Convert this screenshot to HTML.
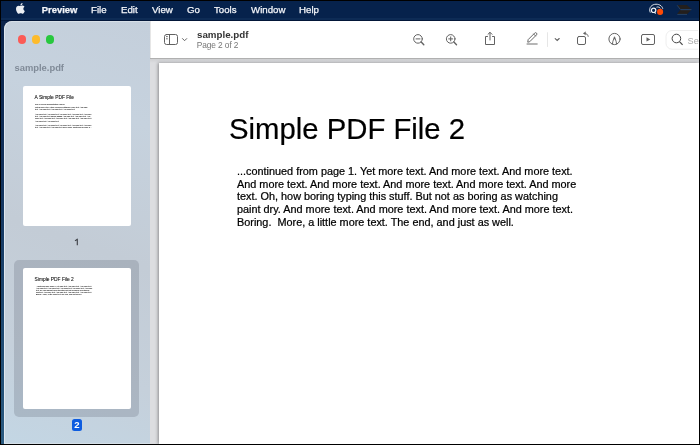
<!DOCTYPE html>
<html><head><meta charset="utf-8">
<style>
*{margin:0;padding:0;box-sizing:border-box}
html,body{width:700px;height:445px;overflow:hidden;background:#000}
body{position:relative;font-family:"Liberation Sans",sans-serif;will-change:transform;background:linear-gradient(#0a2148 0%,#12325c 40%,#1f4a72 75%,#2a5a80 100%)}
.a{position:absolute}
.mi{position:absolute;top:3.9px;color:#f4f6fa;font-size:9.7px;line-height:11px;white-space:nowrap;-webkit-text-stroke:0.25px #f4f6fa}
.tl{position:absolute;width:8.6px;height:8.6px;border-radius:50%;top:35.2px}
.thumb{position:absolute;background:#fff;border-radius:2px;overflow:hidden}
.pg{position:absolute;left:0;top:0;width:650px;height:850px;transform-origin:0 0;color:#000;white-space:nowrap}
.th .bd{-webkit-text-stroke:0.2px #222;color:#222}
.th .ttl{-webkit-text-stroke:0.4px #000}
.t1 .bd{line-height:12.9px;left:73px}
.ttl{position:absolute;left:70px;font-size:29.3px;line-height:34px}
.bd{position:absolute;left:78px;font-size:10.87px;line-height:12.7px;-webkit-text-stroke:0.22px #000}
</style></head><body>
<!-- menubar -->
<div class="a" style="left:0;top:0;width:700px;height:18px;background:#06224c"></div>
<div class="a" style="left:0;top:17.5px;width:700px;height:2.5px;background:#0d2b55"></div>
<div class="a" style="left:0;top:20px;width:700px;height:1px;background:#021638"></div>
<div class="a" style="left:0;top:0;width:700px;height:1px;background:#000"></div>
<div class="a" style="left:0;top:0;width:1px;height:445px;background:#000"></div>
<svg class="a" style="left:16.1px;top:3.2px" width="8.8" height="10.8" viewBox="0 0 814 1000">
  <path fill="#eceff3" d="M788.1 340.9c-5.8 4.5-108.2 62.2-108.2 190.5 0 148.4 130.3 200.9 134.2 202.2-.6 3.2-20.7 71.9-68.7 141.9-42.8 61.6-87.5 123.1-155.5 123.1s-85.5-39.5-164-39.5c-76.5 0-103.7 40.8-165.9 40.8s-105.6-57-155.5-127C46.7 790.7 0 663 0 541.8c0-194.4 126.4-297.5 250.8-297.5 66.1 0 121.2 43.4 162.7 43.4 39.5 0 101.1-46 176.3-46 28.5 0 130.9 2.6 198.3 99.2zm-234-181.5c31.1-36.9 53.1-88.1 53.1-139.3 0-7.1-.6-14.300-1.9-20.1-50.6 1.9-110.8 33.7-147.1 75.8-28.5 32.4-55.1 83.6-55.1 135.5 0 7.8 1.3 15.6 1.9 18.1 3.2.6 8.4 1.3 13.6 1.3 45.4 0 102.5-30.4 135.5-71.3z"/>
</svg>
<div class="mi" style="left:41.7px;top:3.6px;font-weight:bold;font-size:9.45px">Preview</div>
<div class="mi" style="left:91px">File</div>
<div class="mi" style="left:121px">Edit</div>
<div class="mi" style="left:152px">View</div>
<div class="mi" style="left:187px">Go</div>
<div class="mi" style="left:214px">Tools</div>
<div class="mi" style="left:251px">Window</div>
<div class="mi" style="left:299px">Help</div>
<svg class="a" style="left:640px;top:0" width="60" height="20" viewBox="640 0 60 20">
  <g fill="none" stroke="#f0f2f6" stroke-width="0.9">
    <path d="M650.3 12.6 C648.6 9 650.5 5.2 654.5 4.4 C658.5 3.6 662.2 5.6 662.8 8.8"/>
    <path d="M656.5 7.2 C658 6.6 659.6 7.2 660.4 8.4"/>
    <circle cx="653.6" cy="10.3" r="2.2" stroke-width="1.2"/>
    <path d="M654.5 12.2 L655.6 13.6" stroke-width="1.1"/>
  </g>
  <circle cx="660.1" cy="11.9" r="3.05" fill="#ff4b06"/>
  <path d="M677 5.1 L686.8 5.1 L691.6 9.3 L680.1 9.3 Z" fill="#231f1d"/>
  <path d="M680 10.1 L691.2 10.1 L687.1 14.2 L677 14.2 Z" fill="#231f1d"/>
  <path d="M677.2 5.3 L680.2 9.3" stroke="#34587f" stroke-width="0.6"/>
  <path d="M680.5 9.7 H691.5" stroke="#34587f" stroke-width="0.7"/>
  <path d="M677.3 14.4 H687" stroke="#34587f" stroke-width="0.6"/>
</svg>

<!-- window -->
<div class="a" style="left:4px;top:21px;width:695px;height:423px;border-radius:8px 0 0 0;overflow:hidden;background:#dbdbdb">
  <!-- sidebar -->
  <div class="a" style="left:0;top:0;width:146px;height:423px;background:linear-gradient(200deg,#c4cfdb 0%,#c6d2de 22%,#c3ccd6 52%,#c5d0db 78%,#c3d6e4 100%);border-left:1px solid #dfe7ee;border-top:1px solid #d7dfe7;border-radius:8px 0 0 0"></div>
  <div class="a" style="left:0;top:422px;width:146px;height:1px;background:#d6e0e8"></div>
</div>
<div class="tl" style="left:17.75px;background:#fb5b56"></div>
<div class="tl" style="left:31.85px;background:#fdbb2c"></div>
<div class="tl" style="left:45.7px;background:#28c83e"></div>
<div class="a" style="left:14.5px;top:62px;font-size:9.4px;line-height:11px;font-weight:bold;color:#808b98;white-space:nowrap">sample.pdf</div>

<div class="thumb" style="left:23px;top:86px;width:108px;height:140px">
  <div class="pg th t1" style="transform:scale(0.166)">
    <div class="ttl" style="top:53px">A Simple PDF File</div>
    <div class="bd" style="top:103px">This is a small demonstration .pdf file -</div>
    <div class="bd" style="top:123.5px">just for use in the Virtual Mechanics tutorials. More text. And more<br>text. And more text. And more text. And more text.</div>
    <div class="bd" style="top:165px">And more text. And more text. And more text. And more text. And more<br>text. And more text. Boring, zzzzz. And more text. And more text. And<br>more text. And more text. And more text. And more text. And more text.<br>And more text. And more text.</div>
    <div class="bd" style="top:229.5px">And more text. And more text. And more text. And more text. And more<br>text. And more text. And more text. Even more. Continued on page 2 ...</div>
  </div>
</div>
<svg class="a" style="left:70px;top:235px" width="12" height="14" viewBox="70 235 12 14"><path d="M75 240.9 L77.3 239.2 V245.3" fill="none" stroke="#404349" stroke-width="1.15" stroke-linejoin="round"/></svg>
<div class="a" style="left:14px;top:260px;width:125px;height:157px;border-radius:5px;background:rgba(95,105,120,0.26)"></div>
<div class="thumb" style="left:23px;top:268px;width:108px;height:141px">
  <div class="pg th" style="transform:scale(0.166)">
    <div class="ttl" style="top:54px">Simple PDF File 2</div>
    <div class="bd" style="top:104px">...continued from page 1. Yet more text. And more text. And more text.<br>And more text. And more text. And more text. And more text. And more<br>text. Oh, how boring typing this stuff. But not as boring as watching<br>paint dry. And more text. And more text. And more text. And more text.<br>Boring.&nbsp; More, a little more text. The end, and just as well.</div>
  </div>
</div>
<div class="a" style="left:72px;top:418.5px;width:10px;height:12.5px;border-radius:2.5px;background:#0d5ce0;color:#fff;font-size:9.6px;font-weight:bold;text-align:center;line-height:12.5px">2</div>

<!-- doc area -->
<div class="a" style="left:150px;top:59px;width:549px;height:385px;background:linear-gradient(#cfd0d2,#dcdde0 4px,#dcdde0)"></div>
<div class="a" style="left:159px;top:63px;width:540px;height:381px;background:#fff;box-shadow:-1px 0 3px rgba(0,0,0,.36);overflow:hidden">
  <div class="pg" style="left:0;top:0">
    <div class="ttl" style="top:48.6px;left:70px;-webkit-text-stroke:0.2px #000">Simple PDF File 2</div>
    <div class="bd" style="top:102px;left:78px">...continued from page 1. Yet more text. And more text. And more text.<br>And more text. And more text. And more text. And more text. And more<br>text. Oh, how boring typing this stuff. But not as boring as watching<br>paint dry. And more text. And more text. And more text. And more text.<br>Boring.&nbsp; More, a little more text. The end, and just as well.</div>
  </div>
</div>

<!-- toolbar -->
<div class="a" style="left:150px;top:21px;width:549px;height:38px;background:#fff;border-bottom:1px solid #b0b0b0"></div>
<div class="a" style="left:150px;top:21px;width:1px;height:37px;background:#e6e6e6"></div>
<svg class="a" style="left:150px;top:21px" width="548" height="37" viewBox="150 21 548 37">
  <g fill="none" stroke="#626262" stroke-width="1" stroke-linecap="round">
    <rect x="164.5" y="34.5" width="13" height="10" rx="2"/>
    <line x1="169.5" y1="34.5" x2="169.5" y2="44.5"/>
    <line x1="166" y1="36.6" x2="167.8" y2="36.6" stroke-width="0.9" stroke-linecap="butt"/>
    <line x1="166" y1="38.8" x2="167.8" y2="38.8" stroke-width="0.9" stroke-linecap="butt"/>
    <path d="M182.5 38.6 L184.6 40.7 L186.7 38.6"/>
    <circle cx="418" cy="38.9" r="4.3"/>
    <line x1="421.2" y1="42.1" x2="423.8" y2="44.7" stroke-width="1.4"/>
    <line x1="416" y1="38.9" x2="420" y2="38.9"/>
    <circle cx="450.7" cy="38.9" r="4.3"/>
    <line x1="453.9" y1="42.1" x2="456.5" y2="44.7" stroke-width="1.4"/>
    <line x1="448.7" y1="38.9" x2="452.7" y2="38.9"/>
    <line x1="450.7" y1="36.9" x2="450.7" y2="40.9"/>
    <path d="M487.5 36.5 H485.5 V44.5 H494.5 V36.5 H492.5"/>
    <line x1="490" y1="32.5" x2="490" y2="40"/>
    <path d="M488 34.3 L490 32.3 L492 34.3"/>
    <path d="M527.8 41.8 L528.15 39.61 L534.68 33.08 Q535.6 32.16 536.52 33.08 Q537.44 34 536.52 34.92 L529.99 41.45 Z" stroke-width="0.95" stroke-linejoin="round"/>
    <line x1="533.69" y1="34.07" x2="535.53" y2="35.91" stroke-width="0.9"/>
    <line x1="526.6" y1="44" x2="537.6" y2="44" stroke="#a4a4a4" stroke-width="1.6" stroke-linecap="butt"/>
    <path d="M555.2 38.6 L557.2 40.4 L559.2 38.5" stroke-width="1.1"/>
    <rect x="577.5" y="36.5" width="8" height="8" rx="1.5"/>
    <path d="M584 33.4 C586.3 33.2 588 34.4 588.2 36.4" stroke-width="0.95"/>
    <path d="M585.2 32.1 L583.6 33.4 L585.2 34.6 Z" fill="#626262" stroke-width="0.6"/>
    <circle cx="614.5" cy="39" r="5.6"/>
    <path d="M612.4 44 L612.9 41.3 L614.5 36.8 L616.1 41.3 L616.6 44" stroke-width="0.95"/>
    <rect x="641.5" y="34.5" width="13" height="10" rx="1.5"/>
  </g>
  <path d="M646.5 37.2 L650.3 39.4 L646.5 41.6 Z" fill="#626262"/>
  <path d="M614.5 36.8 L613.7 39.2 L615.3 39.2 Z" fill="#626262"/>
  <line x1="547.5" y1="32.3" x2="547.5" y2="46.9" stroke="#e6e6e6" stroke-width="1"/>
  <rect x="666" y="30.5" width="60" height="18.7" rx="6" fill="#fff" stroke="#eeeeee"/>
  <g fill="none" stroke="#454545" stroke-width="1">
    <circle cx="676.4" cy="38.5" r="4.3"/>
    <line x1="679.5" y1="41.6" x2="682.6" y2="44.8" stroke-width="1.2"/>
  </g>
</svg>
<div class="a" style="left:687.6px;top:35.8px;font-size:9.2px;line-height:11px;color:#a8a8a8;white-space:nowrap">Se</div>
<div class="a" style="left:197px;top:28.5px;font-size:9.75px;line-height:11px;font-weight:bold;color:#333;white-space:nowrap">sample.pdf</div>
<div class="a" style="left:196.8px;top:40.3px;font-size:8.35px;line-height:10px;color:#777;letter-spacing:-0.1px;white-space:nowrap">Page 2 of 2</div>

<!-- right / bottom edges -->
<div class="a" style="left:699px;top:0;width:1px;height:445px;background:#000"></div>
<div class="a" style="left:0;top:444px;width:700px;height:1px;background:#000"></div>
</body></html>
